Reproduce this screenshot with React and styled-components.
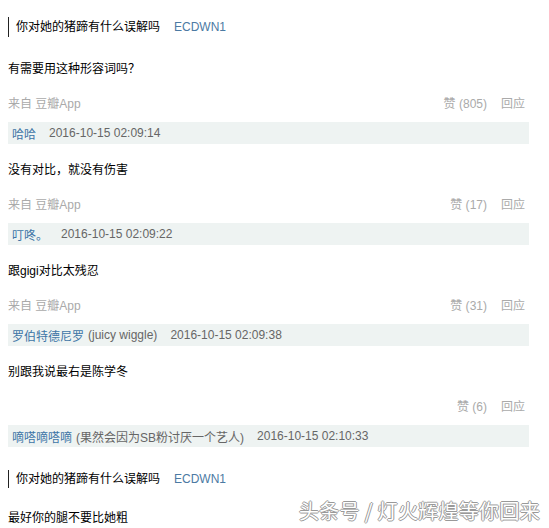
import React from 'react'
import styled, { createGlobalStyle } from 'styled-components'

const GlobalStyle = createGlobalStyle`
  body {
    margin: 0;
    background: #fff;
    font-family: "Liberation Sans", "Noto Sans CJK SC", sans-serif;
  }
`

const Page = styled.div`
  position: relative;
  width: 549px;
  height: 528px;
  overflow: hidden;
  padding: 17px 20px 0 8px;
  box-sizing: border-box;
  font-size: 12px;
  color: #000;
`

const Quote = styled.div`
  display: flex;
  align-items: center;
  height: ${p => p.$tall || 20}px;
  margin-top: ${p => p.$top || 0}px;
  border-left: 1px solid #222;
  padding-left: 7px;
  line-height: 18px;
`

const QuoteUser = styled.span`
  color: #4c7aa3;
  margin-left: 14px;
`

const Comment = styled.div`
  display: flex;
  flex-direction: column;
  margin-top: ${p => p.$top}px;
`

const Text = styled.div`
  line-height: 20px;
  height: 20px;
`

const Meta = styled.div`
  display: flex;
  justify-content: space-between;
  align-items: center;
  height: 20px;
  margin-top: 13px;
  padding-right: 4px;
  color: #aaa;
`

const Actions = styled.div`
  display: flex;
  gap: 14px;
`

const AuthorBar = styled.div`
  display: flex;
  align-items: center;
  height: 22px;
  margin-top: 10px;
  padding-left: 4px;
  background: #eef3f2;
  color: #666;
`

const Name = styled.span`
  color: #3d75a6;
`

const Sign = styled.span`
  color: #666;
  margin-left: 4px;
`

const Time = styled.span`
  margin-left: 13px;
`

const Watermark = styled.div`
  position: absolute;
  left: 299px;
  top: 500px;
  font-family: "Noto Sans CJK SC", sans-serif;
  font-size: 20px;
  line-height: 22px;
  color: #fff;
  letter-spacing: 0.3px;
  text-shadow: 1px 0 0 #999, -1px 0 0 #999, 0 1px 0 #999, 0 -1px 0 #999;
`

const comments = [
  { text: '有需要用这种形容词吗？', from: true, likes: 805, name: '哈哈', time: '2016-10-15 02:09:14', top: 22 },
  { text: '没有对比，就没有伤害', from: true, likes: 17, name: '叮咚。', time: '2016-10-15 02:09:22', top: 16 },
  { text: '跟gigi对比太残忍', from: true, likes: 31, name: '罗伯特德尼罗', sign: '(juicy wiggle)', time: '2016-10-15 02:09:38', top: 16 },
  { text: '别跟我说最右是陈学冬', from: false, likes: 6, name: '嘀嗒嘀嗒嘀', sign: '(果然会因为SB粉讨厌一个艺人)', time: '2016-10-15 02:10:33', top: 16 },
]

export default function App() {
  return (
    <Page>
      <GlobalStyle />
      <Quote>
        你对她的猪蹄有什么误解吗<QuoteUser>ECDWN1</QuoteUser>
      </Quote>
      {comments.map(c => (
        <Comment key={c.time} $top={c.top}>
          <Text>{c.text}</Text>
          <Meta>
            <span>{c.from ? '来自 豆瓣App' : ''}</span>
            <Actions>
              <span>赞 ({c.likes})</span>
              <span>回应</span>
            </Actions>
          </Meta>
          <AuthorBar>
            <Name>{c.name}</Name>
            {c.sign && <Sign>{c.sign}</Sign>}
            <Time>{c.time}</Time>
          </AuthorBar>
        </Comment>
      ))}
      <Quote $top={23} $tall={18}>
        你对她的猪蹄有什么误解吗<QuoteUser>ECDWN1</QuoteUser>
      </Quote>
      <Comment $top={20}>
        <Text>最好你的腿不要比她粗</Text>
      </Comment>
      <Watermark>头条号 / 灯火辉煌等你回来</Watermark>
    </Page>
  )
}
